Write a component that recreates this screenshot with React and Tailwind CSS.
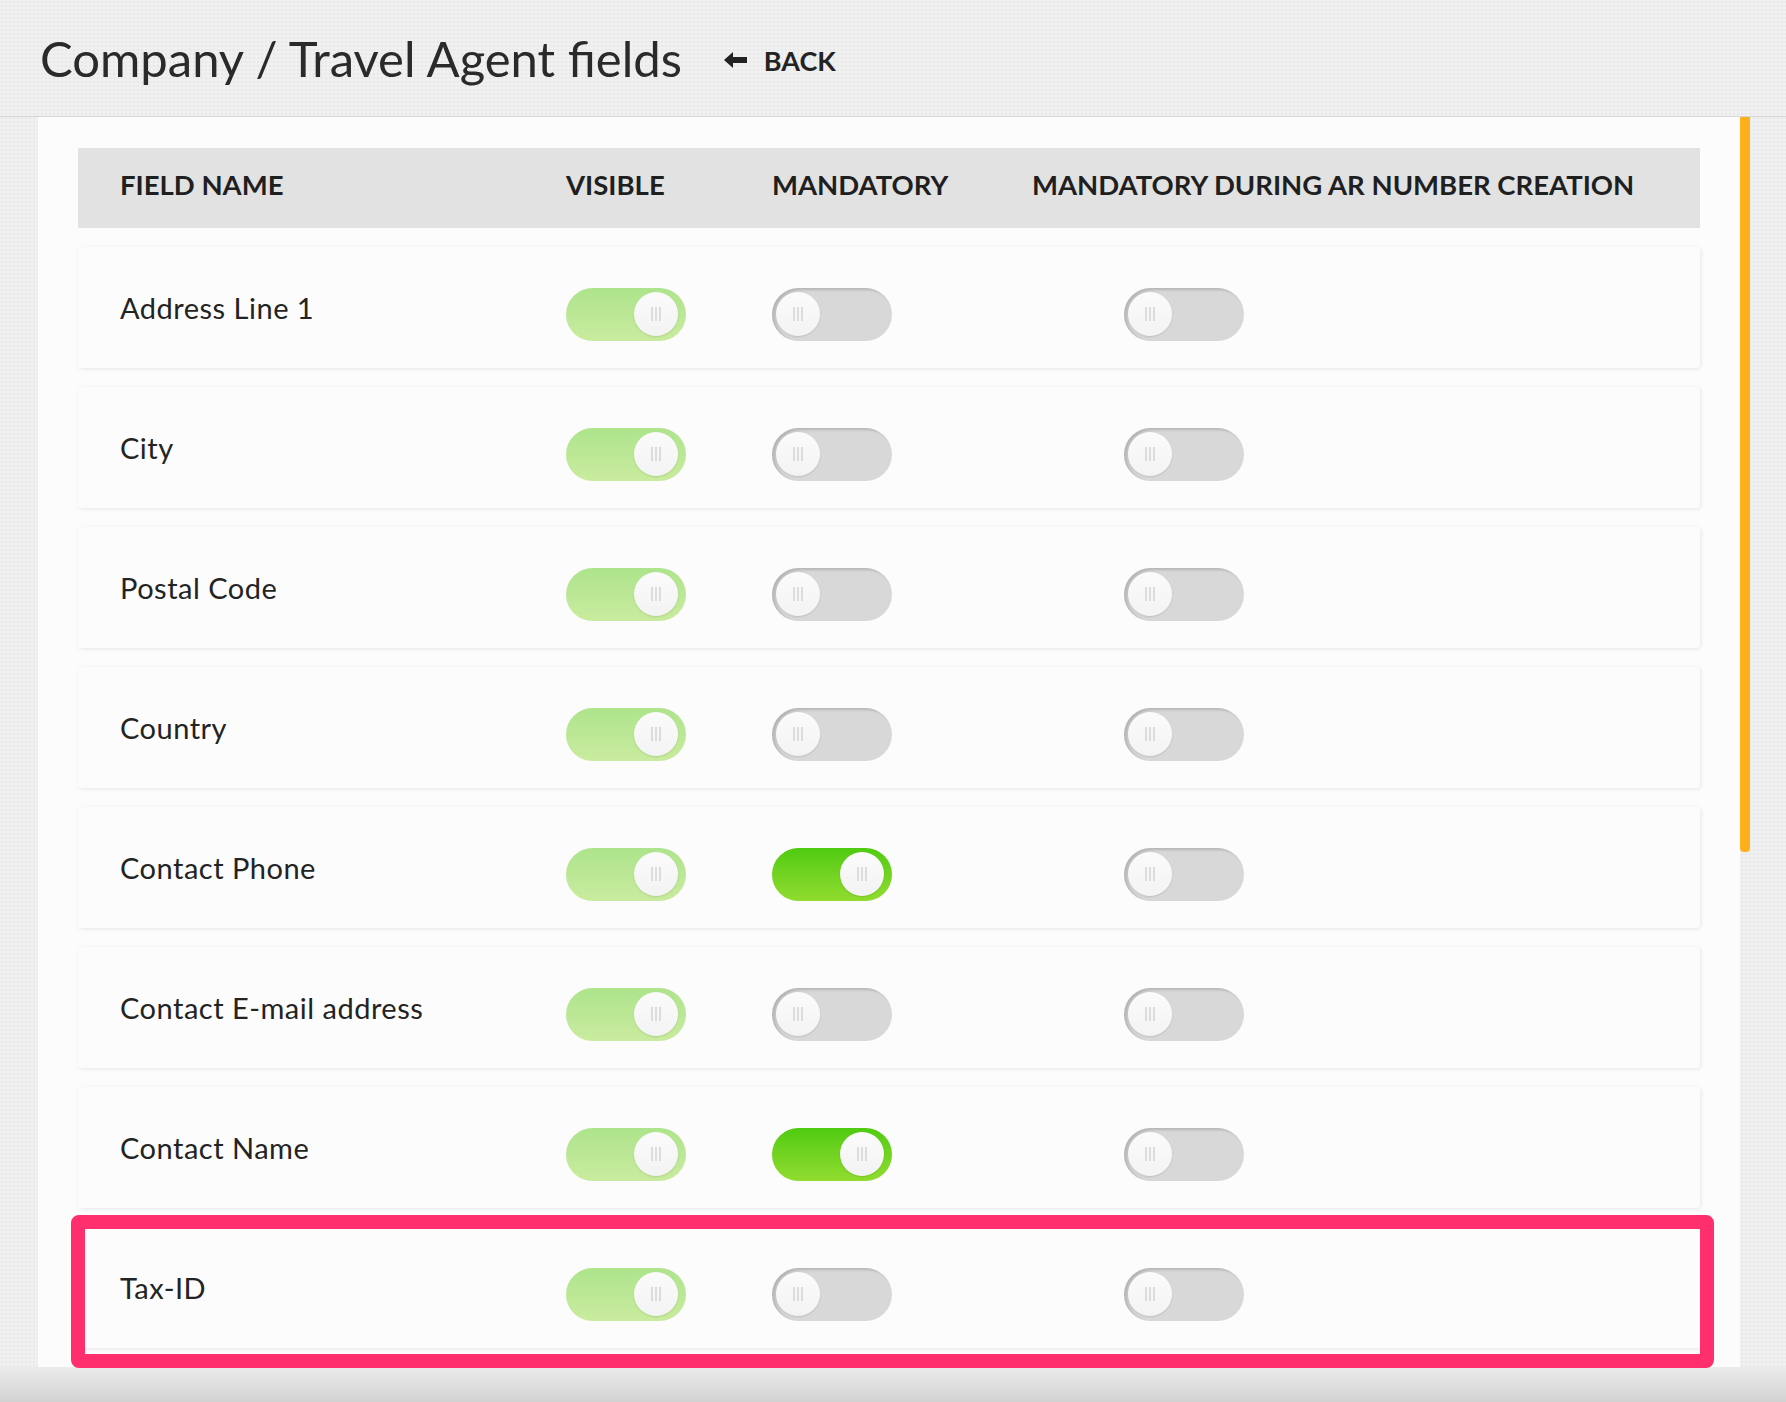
import React from 'react';

const fields = [
  { name: 'Address Line 1', mandatory: false },
  { name: 'City', mandatory: false },
  { name: 'Postal Code', mandatory: false },
  { name: 'Country', mandatory: false },
  { name: 'Contact Phone', mandatory: true },
  { name: 'Contact E-mail address', mandatory: false },
  { name: 'Contact Name', mandatory: true },
  { name: 'Tax-ID', mandatory: false, highlight: true },
];

const texture =
  'bg-[#f0f0f0] bg-[radial-gradient(rgba(0,0,0,0.035)_1px,transparent_1px)] bg-[size:4px_4px]';

function Grip() {
  return (
    <div className="flex gap-[2px]">
      <span className="w-[2px] h-[14px] bg-[#dcdcdc]" />
      <span className="w-[2px] h-[14px] bg-[#dcdcdc]" />
      <span className="w-[2px] h-[14px] bg-[#dcdcdc]" />
    </div>
  );
}

function Toggle({ on, soft }) {
  let track = 'bg-[#d8d8d8] shadow-[inset_3px_2px_3px_rgba(0,0,0,0.16)] justify-start pl-[4px]';
  if (on && soft) track = 'bg-linear-to-b from-[#ade48c] to-[#caeb9f] justify-end pr-[8px]';
  if (on && !soft) track = 'bg-linear-to-b from-[#4ecb10] to-[#90dc2f] justify-end pr-[8px]';
  return (
    <div className={`w-[120px] h-[53px] rounded-full flex items-center ${track}`}>
      <div className="w-[44px] h-[44px] rounded-full bg-linear-to-b from-[#fbfbfb] to-[#f3f3f3] shadow-[0_1px_2px_rgba(0,0,0,0.12)] flex items-center justify-center">
        <Grip />
      </div>
    </div>
  );
}

export default function App() {
  return (
    <div
      className={`w-full h-[1402px] overflow-hidden flex flex-col text-[#232323] ${texture}`}
      style={{ fontFamily: 'Lato, "Open Sans", sans-serif' }}
    >
      <div className="h-[117px] shrink-0 border-b border-[#d6d6d6] flex items-center pl-[40px] gap-[42px]">
        <h1 className="text-[49px] leading-none text-[#2a2a2a]">
          Company / Travel Agent fields
        </h1>
        <div className="flex items-center gap-[17px] mt-[4px]">
          <svg width="23" height="16" viewBox="0 0 23 16" className="fill-[#222]">
            <path d="M0 8 L9 0 L9 5 L23 5 L23 11 L9 11 L9 16 Z" />
          </svg>
          <span className="text-[27px] font-bold leading-none">BACK</span>
        </div>
      </div>

      <div className="flex pl-[38px] h-[1250px] shrink-0">
        <div className="w-[1702px] h-full bg-[#fcfcfc] px-[40px] pt-[31px]">
          <div className="h-[80px] bg-[#e2e2e2] grid grid-cols-[446px_206px_260px_1fr] items-center pl-[42px] pb-[6px] text-[27.5px] font-bold text-[#1f1f1f] uppercase">
            <div>Field name</div>
            <div>Visible</div>
            <div>Mandatory</div>
            <div>Mandatory during AR number creation</div>
          </div>
          <div className="flex flex-col gap-[19px] mt-[19px]">
            {fields.map((f) => (
              <div
                key={f.name}
                className="relative h-[121px] rounded-[4px] bg-[#fcfcfc] shadow-[1px_1px_4px_rgba(0,0,0,0.09)] grid grid-cols-[446px_206px_352px_1fr] items-center pl-[42px]"
              >
                <div className="text-[29px] tracking-[0.5px]">{f.name}</div>
                <div className="mt-[13px]">
                  <Toggle on soft />
                </div>
                <div className="mt-[13px]">
                  <Toggle on={f.mandatory} />
                </div>
                <div className="mt-[13px]">
                  <Toggle on={false} />
                </div>
                {f.highlight && (
                  <div className="absolute -left-[7px] -top-[12px] -right-[14px] -bottom-[20px] border-[14px] border-[#ff2e6c] rounded-[8px]" />
                )}
              </div>
            ))}
          </div>
        </div>
        <div className="w-[10px]">
          <div className="h-[735px] bg-[#fdb01b] rounded-b-[4px]" />
        </div>
      </div>

      <div className="flex-1 bg-linear-to-b from-[#ebebeb] to-[#d2d2d2]" />
    </div>
  );
}
